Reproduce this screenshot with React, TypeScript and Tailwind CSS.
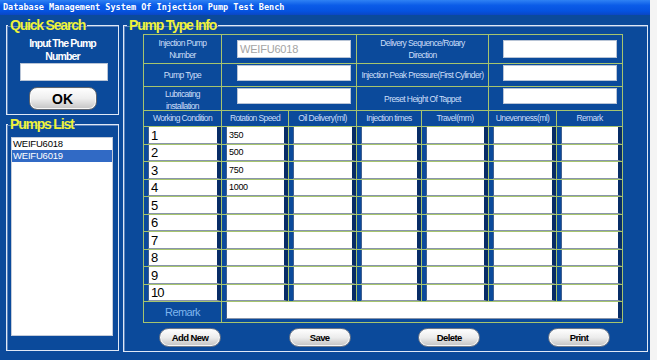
const sans = "font-['Liberation_Sans',Arial,sans-serif]";

const headers = ['Working Condition', 'Rotation Speed', 'Oil Delivery(ml)', 'Injection times', 'Travel(mm)', 'Unevenness(ml)', 'Remark'];
const speeds = ['350', '500', '750', '1000', '', '', '', '', '', ''];

function Label({ lines, className = '' }: { lines: string[]; className?: string }) {
  return (
    <div className={`flex flex-col items-center justify-center overflow-hidden bg-[#0b4a9b] text-[8.5px] leading-[12px] tracking-[-0.6px] text-[#cddff9] ${sans} ${className}`}>
      {lines.map((l) => (
        <span key={l} className="whitespace-nowrap">{l}</span>
      ))}
    </div>
  );
}

function DataCell({ children, className = '' }: { children?: React.ReactNode; className?: string }) {
  return (
    <div className={`flex bg-[#0b4a9b] pl-[4px] ${className}`}>
      <div className="flex flex-1 items-center overflow-hidden border-r-[4px] border-b border-l border-r-[#072c66] border-b-[#8995aa] border-l-[#3f5f8f] bg-white pl-[2px] text-black">
        {children}
      </div>
    </div>
  );
}

function PillButton({ label }: { label: string }) {
  return (
    <button
      className={`h-[19px] w-[62px] rounded-full border border-[#6e7888] bg-[linear-gradient(to_bottom,#ffffff,#ececec_50%,#c2c2c2)] text-[9.5px] font-bold leading-none tracking-[-0.6px] text-black shadow-[inset_0_0_0_1px_#f6f6f6] ${sans}`}
    >
      {label}
    </button>
  );
}

export default function App() {
  return (
    <div className="h-[360px] w-[657px] overflow-hidden bg-[#f4f4f4]">
      <div className="flex h-[360px] w-[650px] flex-col bg-[#0b4a9b]">
        {/* Title bar */}
        <div className="flex h-[15px] items-center bg-[linear-gradient(to_bottom,#2f82f4_0%,#0b5ce8_35%,#0552df_75%,#0a46c4_100%)] pl-[3px]">
          <span className="whitespace-nowrap font-['DejaVu_Sans_Mono',monospace] text-[8.5px] font-bold leading-none text-white">
            Database Management System Of Injection Pump Test Bench
          </span>
        </div>

        <div className="flex gap-[4px] pl-[6px] pt-[2px]">
          {/* Left column */}
          <div className="flex w-[113px] flex-col gap-[1px]">
            <fieldset className="border border-[#dfe8f6] shadow-[inset_1px_1px_0_#5d84bd]">
              <legend className={`ml-[1px] px-[2px] text-[14px] font-bold leading-[16px] tracking-[-1.2px] text-[#eef23a] ${sans}`}>Quick Search</legend>
              <div className="flex flex-col items-center pb-[4px] pt-[4px]">
                <div className={`text-center text-[10.5px] font-bold leading-[13px] tracking-[-0.9px] text-white ${sans}`}>
                  Input The Pump
                  <br />
                  Number
                </div>
                <div className="ml-[3px] h-[18px] w-[88px] border border-[#b8c4d6] bg-white" />
                <button
                  className={`mt-[6px] h-[23px] w-[68px] rounded-[8px] border border-[#5f6670] bg-[linear-gradient(to_bottom,#ffffff,#eeeeee_50%,#c4c4c4)] text-[14px] font-bold leading-none text-black shadow-[inset_0_0_0_1px_#f8f8f8] ${sans}`}
                >
                  OK
                </button>
              </div>
            </fieldset>

            <fieldset className="border border-[#dfe8f6] shadow-[inset_1px_1px_0_#5d84bd]">
              <legend className={`ml-[1px] px-[2px] text-[14px] font-bold leading-[16px] tracking-[-1.2px] text-[#eef23a] ${sans}`}>Pumps List</legend>
              <div className="pb-[14px] pl-[4px] pr-[5px] pt-[5px]">
                <div className={`h-[199px] border border-[#c4ccda] bg-white text-[9.5px] leading-[12px] tracking-[-0.2px] ${sans}`}>
                  <div className="pl-[1px] text-black">WEIFU6018</div>
                  <div className="bg-[#316ac5] pl-[1px] text-white">WEIFU6019</div>
                </div>
              </div>
            </fieldset>
          </div>

          {/* Pump Type Info */}
          <fieldset className="w-[525px] border border-[#dfe8f6] shadow-[inset_1px_1px_0_#5d84bd]">
            <legend className={`ml-[3px] px-[2px] text-[14px] font-bold leading-[16px] tracking-[-1.2px] text-[#eef23a] ${sans}`}>Pump Type Info</legend>
            <div className="pb-[4px] pl-[19px] pt-[1px]">
              <div className="grid w-[480px] grid-cols-[77px_66px_67px_64px_66px_67px_65px] grid-rows-[28px_22px_23px_15px_17px_16px_17px_16px_17px_16px_17px_16px_17px_16px_20px] gap-px border border-[#a6c46e] bg-[#a6c46e]">
                {/* Row 1 */}
                <Label lines={['Injection Pump', 'Number']} />
                <div className="col-span-2 flex bg-[#0b4a9b] pl-[15px] pt-[5px]">
                  <div className={`flex h-[18px] w-[114px] items-center border border-[#b8c4d6] bg-white pl-[2px] text-[11px] tracking-[-0.2px] text-[#a4a4a4] ${sans}`}>
                    WEIFU6018
                  </div>
                </div>
                <Label className="col-span-2" lines={['Delivery Sequence/Rotary', 'Direction']} />
                <div className="col-span-2 flex bg-[#0b4a9b] pl-[14px] pt-[5px]">
                  <div className="h-[18px] w-[114px] border border-[#b8c4d6] bg-white" />
                </div>

                {/* Row 2 */}
                <Label lines={['Pump Type']} />
                <div className="col-span-2 flex bg-[#0b4a9b] pl-[15px] pt-[1px]">
                  <div className="h-[16px] w-[114px] border border-[#b8c4d6] bg-white" />
                </div>
                <Label className="col-span-2" lines={['Injection Peak Pressure(First Cylinder)']} />
                <div className="col-span-2 flex bg-[#0b4a9b] pl-[14px] pt-[1px]">
                  <div className="h-[16px] w-[114px] border border-[#b8c4d6] bg-white" />
                </div>

                {/* Row 3 */}
                <Label className="justify-start pt-[1px]" lines={['Lubricating', 'installation']} />
                <div className="col-span-2 flex bg-[#0b4a9b] pl-[15px] pt-[1px]">
                  <div className="h-[16px] w-[114px] border border-[#b8c4d6] bg-white" />
                </div>
                <Label className="col-span-2" lines={['Preset Height Of Tappet']} />
                <div className="col-span-2 flex bg-[#0b4a9b] pl-[14px] pt-[1px]">
                  <div className="h-[16px] w-[114px] border border-[#b8c4d6] bg-white" />
                </div>

                {/* Header */}
                {headers.map((h) => (
                  <div
                    key={h}
                    className={`flex items-center justify-center whitespace-nowrap bg-[#0b4a9b] text-[8.5px] leading-none tracking-[-0.6px] text-[#c9dcfa] ${sans}`}
                  >
                    {h}
                  </div>
                ))}

                {/* Data rows */}
                {speeds.map((s, i) => (
                  <div key={i} className="contents">
                    <DataCell>
                      <span className={`text-[13px] leading-none tracking-[-1px] ${sans}`}>{i + 1}</span>
                    </DataCell>
                    <DataCell>
                      <span className={`text-[9px] leading-none tracking-[-0.3px] ${sans}`}>{s}</span>
                    </DataCell>
                    <DataCell />
                    <DataCell />
                    <DataCell />
                    <DataCell />
                    <DataCell />
                  </div>
                ))}

                {/* Remark */}
                <div className={`flex items-center justify-center bg-[#0b4a9b] text-[11px] leading-none tracking-[-0.6px] text-[#7fb6ee] ${sans}`}>Remark</div>
                <DataCell className="col-span-6 pb-[3px]" />
              </div>

              <div className="mt-[5px] flex w-[467px] justify-between pl-[16px]">
                <PillButton label="Add New" />
                <PillButton label="Save" />
                <PillButton label="Delete" />
                <PillButton label="Print" />
              </div>
            </div>
          </fieldset>
        </div>
      </div>
    </div>
  );
}
